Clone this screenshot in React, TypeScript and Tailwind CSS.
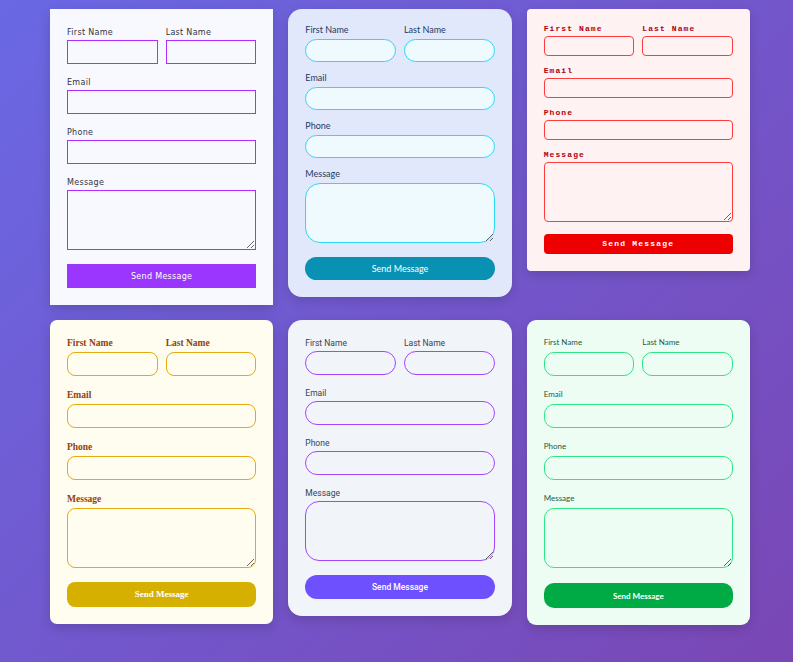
import React from "react";

type Theme = {
  card: string;
  label: string;
  input: string;
  textarea: string;
  button: string;
  labelMb: string;
  rowGap: string;
  btnMt: string;
};

const themes: Theme[] = [
  {
    card: "bg-[#f8f9ff] pt-[17px] pb-[17px] px-[17px] shadow-[0_4px_12px_rgba(0,0,0,0.15)] font-['DejaVu_Sans',sans-serif]",
    label: "h-[10px] text-[8px] leading-[13px] text-[#333344] tracking-[0.3px]",
    labelMb: "mb-[4px]",
    input: "h-[24px] border border-[#b32cff] bg-[#f8f9ff]",
    textarea: "h-[60px] border border-[#b32cff] bg-[#f8f9ff]",
    rowGap: "gap-[12px]",
    btnMt: "mt-[14px]",
    button: "h-[24px] bg-[#9b36ff] text-white text-[8px] tracking-[0.3px] pt-[2px]",
  },
  {
    card: "bg-[#e2e8fb] pt-[15px] pb-[17px] px-[17px] rounded-[14px] shadow-[0_4px_12px_rgba(0,0,0,0.15)] font-['Lato',sans-serif]",
    label: "h-[10px] text-[9px] leading-[12px] text-[#1e3a5f]",
    labelMb: "mb-[5px]",
    input: "h-[23px] border border-[#2bd9f0] bg-[#effaff] rounded-[12px]",
    textarea: "h-[60px] border border-[#2bd9f0] bg-[#effaff] rounded-[15px]",
    rowGap: "gap-[10px]",
    btnMt: "mt-[14px]",
    button: "h-[23px] bg-[#0891b2] text-white text-[9px] rounded-[12px]",
  },
  {
    card: "bg-[#fff2f2] pt-[15px] pb-[17px] px-[17px] rounded-[4px] shadow-[0_4px_12px_rgba(0,0,0,0.15)] font-['Liberation_Mono',monospace]",
    label: "h-[8px] text-[8px] leading-[10px] font-bold text-[#b00010] tracking-[1.1px]",
    labelMb: "mb-[4px]",
    input: "h-[20px] border border-[#ff3b3b] bg-[#fff2f2] rounded-[4px]",
    textarea: "h-[60px] border border-[#ff3b3b] bg-[#fff2f2] rounded-[4px]",
    rowGap: "gap-[10px]",
    btnMt: "mt-[12px]",
    button: "h-[20px] bg-[#ee0000] text-white text-[8px] font-bold rounded-[4px] tracking-[1.2px]",
  },
  {
    card: "bg-[#fffdf0] pt-[17px] pb-[17px] px-[17px] rounded-[7px] shadow-[0_4px_12px_rgba(0,0,0,0.15)] font-['Liberation_Serif',serif]",
    label: "h-[10px] text-[9.5px] leading-[13px] font-bold text-[#92400e]",
    labelMb: "mb-[5px]",
    input: "h-[24px] border border-[#e6aa10] bg-[#fffdf0] rounded-[8px]",
    textarea: "h-[60px] border border-[#e6aa10] bg-[#fffdf0] rounded-[8px]",
    rowGap: "gap-[13px]",
    btnMt: "mt-[14px]",
    button: "h-[25px] bg-[#d6b000] text-white text-[9px] font-bold rounded-[8px] pt-[1px]",
  },
  {
    card: "bg-[#f1f4f9] pt-[17px] pb-[17px] px-[17px] rounded-[14px] shadow-[0_4px_12px_rgba(0,0,0,0.15)] font-['Roboto',sans-serif]",
    label: "h-[10px] text-[8.5px] leading-[12px] text-[#3a4255]",
    labelMb: "mb-[4px]",
    input: "h-[24px] border border-[#a445ff] bg-[#f1f4f9] rounded-[12px]",
    textarea: "h-[60px] border border-[#a445ff] bg-[#f1f4f9] rounded-[14px]",
    rowGap: "gap-[12px]",
    btnMt: "mt-[14px]",
    button: "h-[24px] bg-[#6f50ff] text-white text-[8.5px] font-medium rounded-[12px]",
  },
  {
    card: "bg-[#edfdf4] pt-[17px] pb-[17px] px-[17px] rounded-[9px] shadow-[0_4px_12px_rgba(0,0,0,0.15)] font-['Lato',sans-serif]",
    label: "h-[10px] text-[8px] leading-[10px] text-[#1f5a3a]",
    labelMb: "mb-[5px]",
    input: "h-[24px] border border-[#2ee586] bg-[#edfdf4] rounded-[10px]",
    textarea: "h-[60px] border border-[#2ee586] bg-[#edfdf4] rounded-[10px]",
    rowGap: "gap-[13px]",
    btnMt: "mt-[15px]",
    button: "h-[25px] bg-[#00aa44] text-white text-[8px] font-bold rounded-[10px]",
  },
];

function Field({ t, label, area }: { t: Theme; label: string; area?: boolean }) {
  return (
    <div className="flex flex-col min-w-0">
      <label className={`${t.label} ${t.labelMb} block whitespace-nowrap`}>{label}</label>
      {area ? (
        <textarea className={`${t.textarea} w-full block outline-none`} />
      ) : (
        <input className={`${t.input} w-full block outline-none`} />
      )}
    </div>
  );
}

function Card({ t }: { t: Theme }) {
  return (
    <div className={`${t.card} flex flex-col`}>
      <div className={`flex flex-col ${t.rowGap}`}>
        <div className="grid grid-cols-2 gap-[8px]">
          <Field t={t} label="First Name" />
          <Field t={t} label="Last Name" />
        </div>
        <Field t={t} label="Email" />
        <Field t={t} label="Phone" />
        <Field t={t} label="Message" area />
      </div>
      <button className={`${t.button} ${t.btnMt} w-full flex items-center justify-center`}>
        Send Message
      </button>
    </div>
  );
}

export default function App() {
  return (
    <div className="w-[793px] h-[662px] overflow-hidden bg-[linear-gradient(135deg,#6a68e4_0%,#7a47b5_100%)]">
      <div className="w-[700px] ml-[50px] pt-[9px] grid grid-cols-3 gap-[15px] items-start">
        {themes.map((t, i) => (
          <Card key={i} t={t} />
        ))}
      </div>
    </div>
  );
}
